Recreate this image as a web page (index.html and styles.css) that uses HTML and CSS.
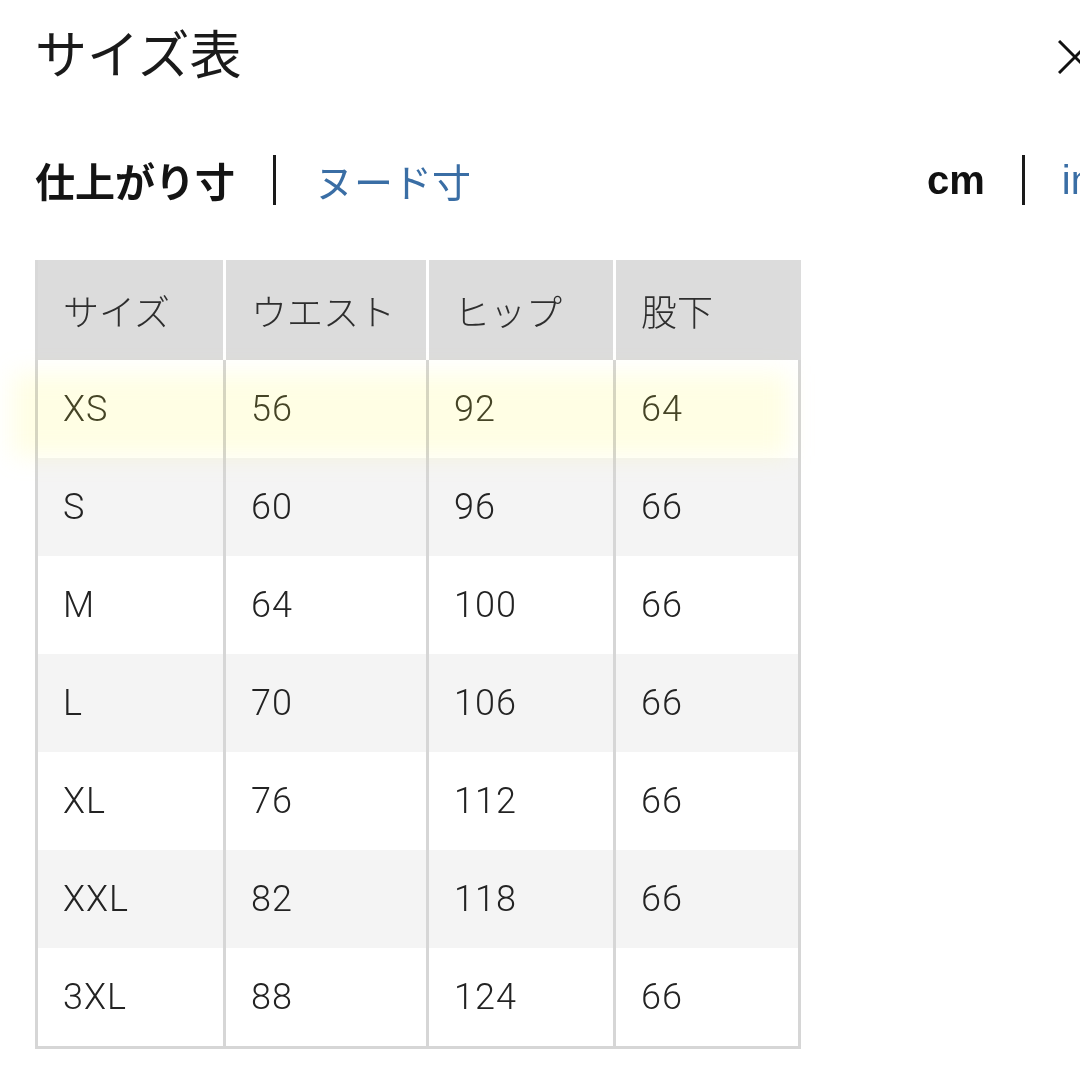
FILE: index.html
```html
<!DOCTYPE html>
<html lang="ja">
<head>
<meta charset="utf-8">
<title>サイズ表</title>
<link rel="stylesheet" href="styles.css">
</head>
<body>
<div class="page">
  <header class="top">
    <h1 class="title">サイズ表</h1>
    <svg class="close" width="34" height="34" viewBox="0 0 34 34" aria-label="閉じる">
      <path d="M1 1 L33 33 M33 1 L1 33" stroke="#111" stroke-width="3" fill="none"/>
    </svg>
  </header>

  <div class="tabs">
    <div class="group">
      <span class="tab active">仕上がり寸</span>
      <span class="sep"></span>
      <span class="tab link">ヌード寸</span>
    </div>
    <div class="group units">
      <span class="unit active">cm</span>
      <span class="sep"></span>
      <span class="unit link">in</span>
    </div>
  </div>

  <div class="table-wrap">
    <table class="size-table">
      <colgroup>
        <col class="c1"><col class="c2"><col class="c3"><col class="c4">
      </colgroup>
      <thead>
        <tr><th>サイズ</th><th>ウエスト</th><th>ヒップ</th><th>股下</th></tr>
      </thead>
      <tbody>
        <tr class="marked"><td>XS</td><td>56</td><td>92</td><td>64</td></tr>
        <tr><td>S</td><td>60</td><td>96</td><td>66</td></tr>
        <tr><td>M</td><td>64</td><td>100</td><td>66</td></tr>
        <tr><td>L</td><td>70</td><td>106</td><td>66</td></tr>
        <tr><td>XL</td><td>76</td><td>112</td><td>66</td></tr>
        <tr><td>XXL</td><td>82</td><td>118</td><td>66</td></tr>
        <tr><td>3XL</td><td>88</td><td>124</td><td>66</td></tr>
      </tbody>
    </table>
    <div class="highlight"></div>
  </div>
</div>
</body>
</html>
```

FILE: styles.css
```css
html, body {
  margin: 0;
  padding: 0;
  background: #ffffff;
  overflow: hidden;
}

.page {
  width: 1080px;
  height: 1080px;
  padding-left: 35px;
  box-sizing: border-box;
  font-family: "Noto Sans CJK JP", sans-serif;
  color: #1a1a1a;
}

.top {
  display: flex;
  justify-content: space-between;
  align-items: flex-start;
  padding-top: 26px;
}

.title {
  margin: 0;
  font-size: 52px;
  line-height: 52px;
  font-weight: 400;
  color: #1a1a1a;
}

.close {
  display: block;
  margin-top: 14px;
  margin-right: -12px;
}

.tabs {
  display: flex;
  justify-content: space-between;
  align-items: center;
  margin-top: 82px;
  height: 40px;
}

.group {
  display: flex;
  align-items: center;
}

.tab {
  font-size: 40px;
  line-height: 40px;
}

.tab.active {
  font-weight: 700;
  color: #141414;
}

.tab.link {
  font-weight: 400;
  font-size: 39px;
  color: #3a6ea5;
}

.sep {
  display: block;
  width: 3px;
  height: 50px;
  background: #1a1a1a;
  margin: 0 39px 0 38px;
}

.units {
  margin-right: -13px;
}

.units .sep {
  margin: 0 37px 0 37px;
}

.unit {
  font-family: "Liberation Sans", Arial, sans-serif;
  font-size: 40px;
  line-height: 40px;
}

.unit.active {
  font-weight: 700;
  color: #111;
}

.unit.link {
  font-weight: 400;
  color: #3a6ea5;
}

.table-wrap {
  position: relative;
  margin-top: 60px;
  width: 766px;
}

.size-table {
  border-collapse: separate;
  border-spacing: 0;
  table-layout: fixed;
  width: 766px;
}

.c1 { width: 188px; }
.c2 { width: 203px; }
.c3 { width: 187px; }
.c4 { width: 188px; }

.size-table th {
  height: 100px;
  padding: 0 0 0 25px;
  text-align: left;
  vertical-align: middle;
  background: #dcdcdc;
  border-left: 3px solid #ffffff;
  font-family: "Noto Sans CJK JP", sans-serif;
  font-size: 36px;
  font-weight: 300;
  color: #2e2e2e;
}

.size-table th:first-child {
  border-left-color: #d8d8d8;
}

.size-table td {
  height: 98px;
  padding: 0 0 0 25px;
  text-align: left;
  vertical-align: middle;
  border-left: 3px solid #d6d6d6;
  font-family: Roboto, "Noto Sans CJK JP", sans-serif;
  font-size: 36px;
  font-weight: 300;
  letter-spacing: 1px;
  color: #232323;
  background: #ffffff;
}

.size-table td:last-child {
  border-right: 3px solid #d6d6d6;
}

.size-table tbody tr:nth-child(even) td {
  background: #f4f4f4;
}

.size-table tbody tr:last-child td {
  border-bottom: 3px solid #d6d6d6;
}

.size-table tr.marked td {
  color: #45442a;
}

.highlight {
  position: absolute;
  left: -22px;
  top: 114px;
  width: 776px;
  height: 82px;
  background: rgba(255, 250, 120, 0.2);
  filter: blur(12px);
  mix-blend-mode: multiply;
  pointer-events: none;
}
```
